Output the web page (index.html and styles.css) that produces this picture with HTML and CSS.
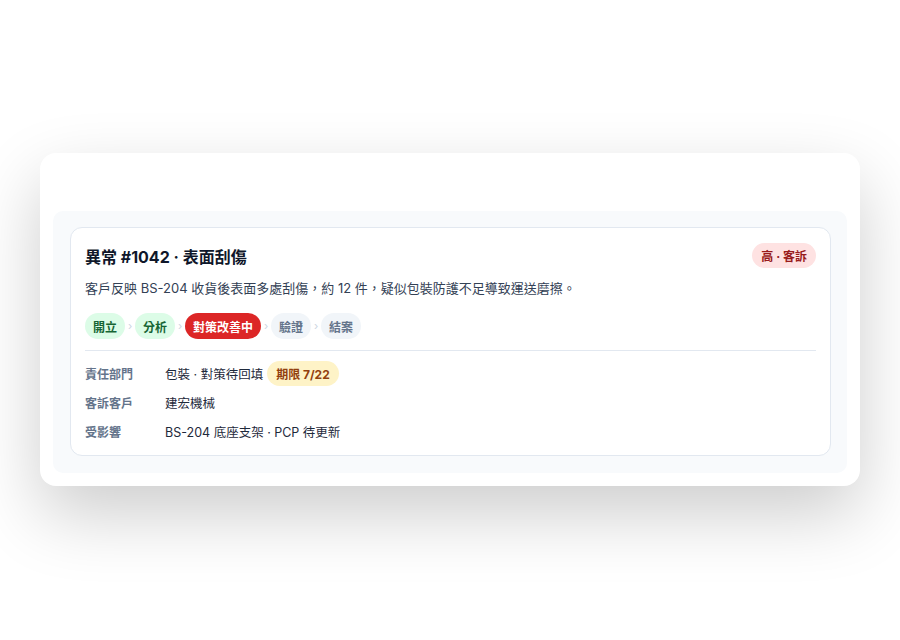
FILE: index.html
```html
<!DOCTYPE html>
<html lang="zh-Hant">
<head>
    <meta charset="UTF-8">
    <meta name="viewport" content="width=device-width, initial-scale=1.0">
    <title>異常 #1042</title>
    <link rel="stylesheet" href="styles.css">
</head>
<body>
    <div class="frame">
        <div class="panel">
            <div class="issue">
                <div class="issue-head">
                    <h2>異常 #1042 · 表面刮傷</h2>
                    <span class="tag tag-high">高 · 客訴</span>
                </div>
                <p class="desc">客戶反映 BS-204 收貨後表面多處刮傷，約 12 件，疑似包裝防護不足導致運送磨擦。</p>
                <div class="steps">
                    <span class="step done">開立</span>
                    <span class="sep">›</span>
                    <span class="step done">分析</span>
                    <span class="sep">›</span>
                    <span class="step current">對策改善中</span>
                    <span class="sep">›</span>
                    <span class="step">驗證</span>
                    <span class="sep">›</span>
                    <span class="step">結案</span>
                </div>
                <div class="details">
                    <span class="label">責任部門</span>
                    <span class="value">包裝 · 對策待回填 <span class="tag tag-due">期限 7/22</span></span>
                    <span class="label">客訴客戶</span>
                    <span class="value">建宏機械</span>
                    <span class="label">受影響</span>
                    <span class="value">BS-204 底座支架 · PCP 待更新</span>
                </div>
            </div>
        </div>
    </div>
</body>
</html>
```

FILE: styles.css
```css
body {
    font-family: Inter, "Noto Sans CJK TC", sans-serif;
    background-color: #fff;
    margin: 0;
    padding: 153px 0 0;
    box-sizing: border-box;
    min-height: 100vh;
    display: flex;
    align-items: flex-start;
    justify-content: center;
    color: #0f172a;
}
.frame {
    width: 820px;
    box-sizing: border-box;
    background-color: #fff;
    border-radius: 16px;
    padding: 58px 13px 13px;
    box-shadow: 0 28px 70px rgba(0, 0, 0, 0.2);
}
.panel {
    background-color: #f8fafc;
    border-radius: 10px;
    padding: 16px 16px 17px 17px;
}
.issue {
    background-color: #fff;
    border: 1px solid #e2e8f0;
    border-radius: 12px;
    padding: 15px 14px 11px;
}
.issue-head {
    display: flex;
    align-items: center;
    justify-content: space-between;
}
.issue-head h2 {
    margin: 0;
    font-size: 16px;
    font-weight: 700;
    color: #0f172a;
}
.tag {
    display: inline-flex;
    align-items: center;
    height: 25px;
    padding: 0 9px;
    border-radius: 13px;
    font-size: 12px;
    font-weight: 700;
}
.tag-high {
    background-color: #fee2e2;
    color: #991b1b;
}
.tag-due {
    background-color: #fef3c7;
    color: #92400e;
    margin-left: 1px;
}
.desc {
    margin: 10px 0 0;
    font-size: 13px;
    line-height: 20px;
    color: #334155;
}
.steps {
    display: flex;
    align-items: center;
    gap: 3px;
    margin-top: 15px;
    padding-bottom: 11px;
    border-bottom: 1px solid #e2e8f0;
}
.step {
    display: inline-flex;
    align-items: center;
    height: 26px;
    padding: 0 8px;
    border-radius: 13px;
    font-size: 12px;
    font-weight: 700;
    background-color: #f1f5f9;
    color: #64748b;
}
.step.done {
    background-color: #dcfce7;
    color: #166534;
}
.step.current {
    background-color: #dc2626;
    color: #fff;
}
.sep {
    font-size: 11px;
    color: #cbd5e1;
    width: 4px;
    text-align: center;
}
.details {
    display: grid;
    grid-template-columns: 80px 1fr;
    row-gap: 4px;
    margin-top: 10px;
}
.label,
.value {
    display: flex;
    align-items: center;
    min-height: 25px;
    font-size: 12px;
}
.label {
    font-weight: 600;
    color: #64748b;
}
.value {
    font-size: 12.5px;
    color: #1e293b;
    gap: 3px;
}
```
